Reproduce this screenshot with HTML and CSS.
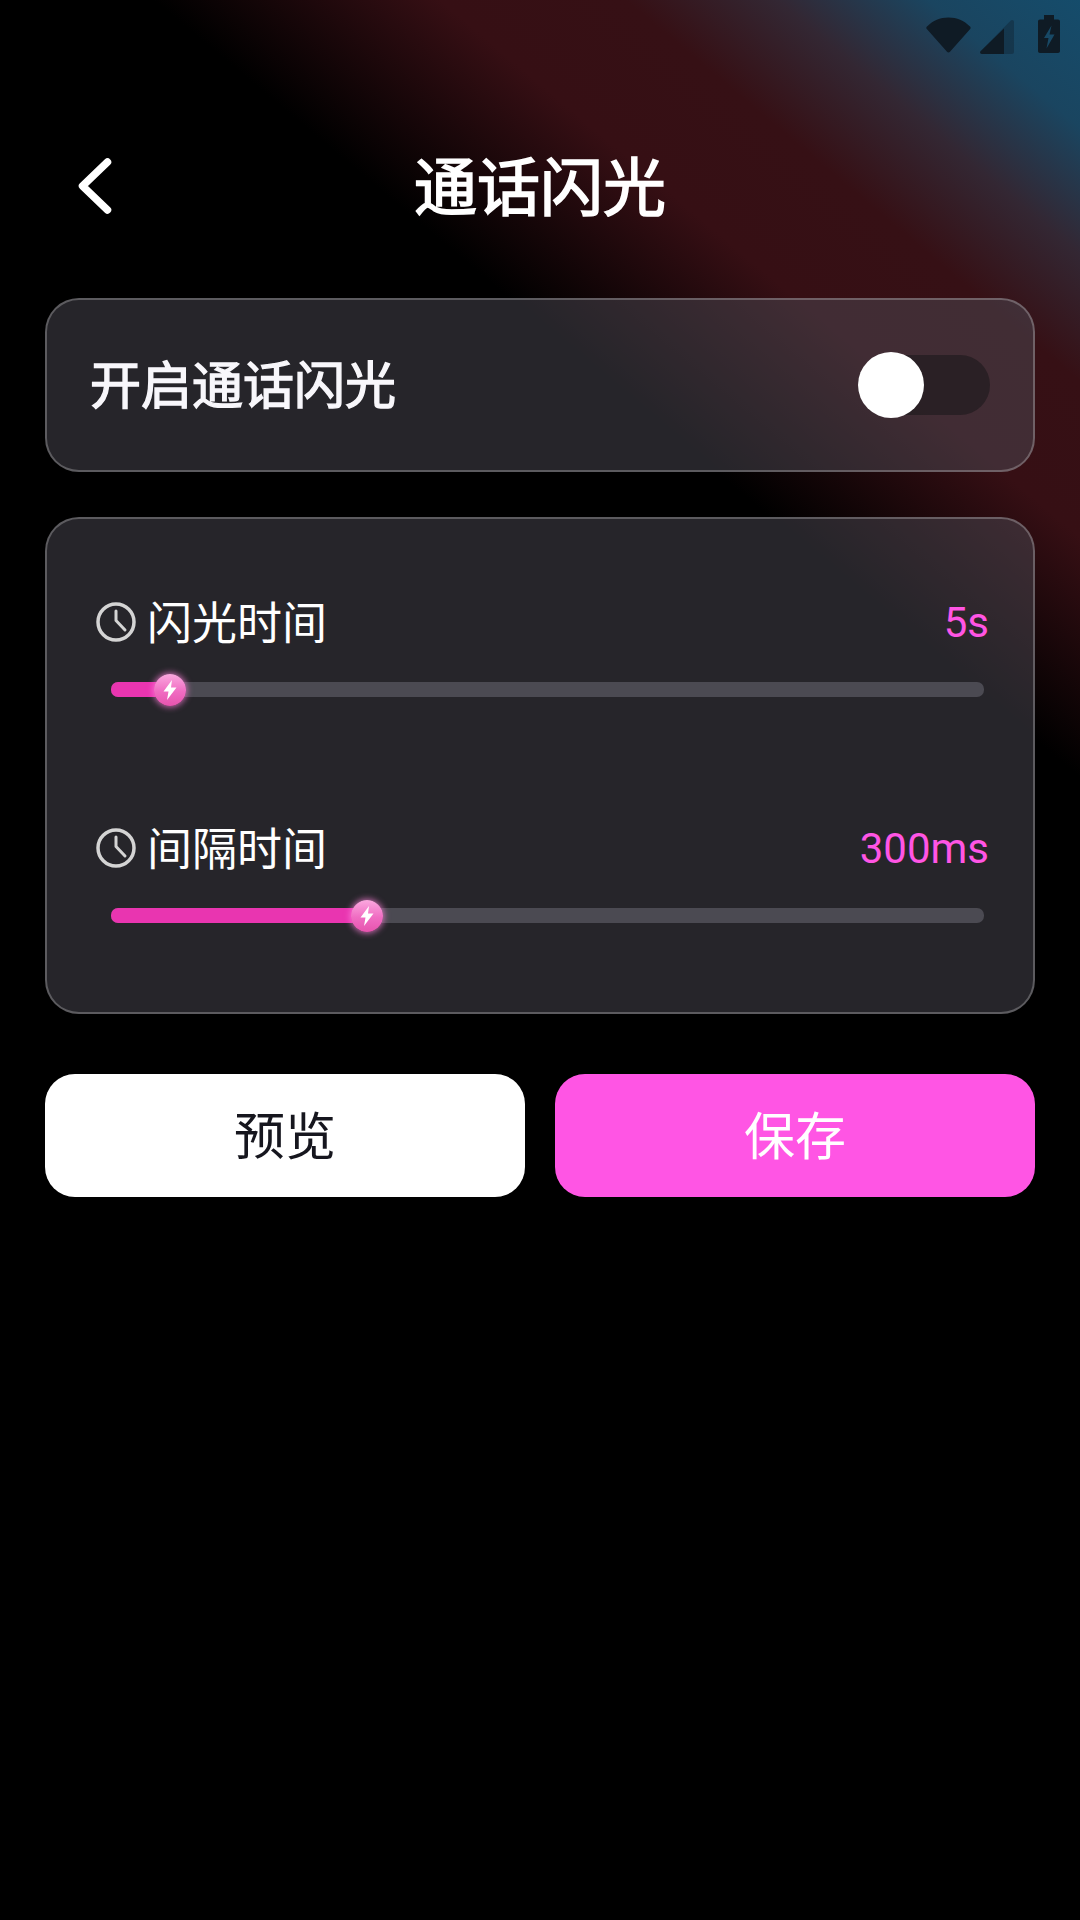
FILE: index.html
```html
<!DOCTYPE html>
<html lang="zh-CN">
<head>
    <meta charset="UTF-8">
    <meta name="viewport" content="width=device-width, initial-scale=1.0">
    <title>通话闪光</title>
    <link rel="stylesheet" href="styles.css">
</head>
<body>

    <div class="status-bar">
        <svg class="icon-wifi" width="45" height="36" viewBox="0 0 45 36">
            <path d="M1 9.500C7 3.500 14 0.500 22.500 0.500S38 3.500 44 9.500C44.800 10.300 44.800 11.200 44.200 12L24 34.800C23.100 35.700 21.900 35.700 21 34.800L0.800 12C0.200 11.200 0.200 10.300 1 9.500Z"/>
        </svg>
        <svg class="icon-signal" width="34" height="34" viewBox="0 0 34 34">
            <path d="M32 0C33.200 0 34 .8 34 2V32C34 33.200 33.200 34 32 34H2C.4 34-.4 32.400.6 31.200L30.600.7C31 .3 31.500 0 32 0Z" opacity=".35"/>
            <path d="M24 8.400V34H2C.4 34-.4 32.400.6 31.200Z"/>
        </svg>
        <svg class="icon-battery" width="22" height="38" viewBox="0 0 22 38">
            <path fill-rule="evenodd" d="M6 0H16V4.500H20C21.200 4.500 22 5.300 22 6.500V36C22 37.200 21.200 38 20 38H2C.8 38 0 37.200 0 36V6.500C0 5.300.8 4.500 2 4.500H6ZM13.500 10.500L6 23H10.500L8.500 33.500L16.500 19.500H11.500Z"/>
        </svg>
    </div>

    <header class="header">
        <svg class="back" width="36" height="60" viewBox="0 0 36 60">
            <path d="M30.500 6L5.500 30L30.500 54"/>
        </svg>
        <h1>通话闪光</h1>
    </header>

    <main class="container">
        <section class="card card-switch">
            <span class="switch-label">开启通话闪光</span>
            <div class="switch">
                <div class="switch-knob"></div>
            </div>
        </section>

        <section class="card card-sliders">
            <div class="setting">
                <div class="setting-head">
                    <svg class="clock" width="40" height="40" viewBox="0 0 40 40">
                        <circle cx="20" cy="20" r="18"/>
                        <path d="M20 9V18.500L29 28"/>
                    </svg>
                    <span class="setting-name">闪光时间</span>
                    <span class="setting-value">5s</span>
                </div>
                <div class="slider">
                    <div class="slider-fill" style="width: 59px">
                        <div class="slider-thumb">
                            <svg width="14" height="20" viewBox="0 0 14 20">
                                <path d="M9 0L0.500 11.500H5.500L4 20L13.500 7.500H8Z"/>
                            </svg>
                        </div>
                    </div>
                </div>
            </div>

            <div class="setting">
                <div class="setting-head">
                    <svg class="clock" width="40" height="40" viewBox="0 0 40 40">
                        <circle cx="20" cy="20" r="18"/>
                        <path d="M20 9V18.500L29 28"/>
                    </svg>
                    <span class="setting-name">间隔时间</span>
                    <span class="setting-value">300ms</span>
                </div>
                <div class="slider">
                    <div class="slider-fill" style="width: 256px">
                        <div class="slider-thumb">
                            <svg width="14" height="20" viewBox="0 0 14 20">
                                <path d="M9 0L0.500 11.500H5.500L4 20L13.500 7.500H8Z"/>
                            </svg>
                        </div>
                    </div>
                </div>
            </div>
        </section>

        <div class="actions">
            <button class="btn btn-preview">预览</button>
            <button class="btn btn-save">保存</button>
        </div>
    </main>

</body>
</html>
```

FILE: styles.css
```css
:root {
    --accent-color: #ff55e4;
    --fill-color: #e935b0;
    --track-color: #4b4a52;
    --text-color: #ffffff;
    --status-color: #0f1b25;
    --font-stack: 'Noto Sans CJK SC', 'Noto Sans', sans-serif;
}

* {
    box-sizing: border-box;
    margin: 0;
    padding: 0;
}

body {
    width: 1080px;
    height: 1920px;
    overflow: hidden;
    font-family: var(--font-stack);
    color: var(--text-color);
    background-color: #000;
    background-image: linear-gradient(40deg, #000 72.5%, #280b0f 78.8%, #360f14 81%, #361015 86.5%, #332733 91%, #1a4560 95.5%, #154c6b 100%);
}

.status-bar {
    height: 70px;
    padding: 15px 20px 0 0;
    display: flex;
    justify-content: flex-end;
    fill: var(--status-color);
}

.icon-wifi {
    margin-top: 2px;
}

.icon-signal {
    margin: 5px 0 0 9px;
}

.icon-battery {
    margin-left: 24px;
}

.header {
    height: 116px;
    margin-top: 58px;
    position: relative;
    display: flex;
    justify-content: center;
    align-items: center;
}

/* only regular and bold are installed, the stroke gives the medium weight */
.header h1 {
    font-size: 63px;
    font-weight: 400;
    -webkit-text-stroke: 1.6px currentColor;
    line-height: 1;
    margin-top: -7px;
}

.back {
    position: absolute;
    left: 77px;
    top: 28px;
    fill: none;
    stroke: var(--text-color);
    stroke-width: 7.500;
    stroke-linecap: round;
    stroke-linejoin: round;
}

.container {
    padding: 54px 45px 0;
}

.card {
    border: 2px solid rgba(255, 255, 255, 0.25);
    border-radius: 34px;
    background-color: rgba(76, 74, 84, 0.5);
}

.card-switch {
    height: 174px;
    padding: 0 43px 0 43px;
    display: flex;
    justify-content: space-between;
    align-items: center;
}

.switch-label {
    font-size: 51px;
    font-weight: 400;
    -webkit-text-stroke: 1.4px currentColor;
    line-height: 60px;
    margin-top: -6px;
    color: #f8f7fb;
}

.switch {
    position: relative;
    width: 132px;
    height: 60px;
    border-radius: 30px;
    background-color: rgba(20, 20, 22, 0.5);
}

.switch-knob {
    position: absolute;
    left: 0;
    top: -3px;
    width: 66px;
    height: 66px;
    border-radius: 50%;
    background-color: #fff;
}

.card-sliders {
    height: 497px;
    margin-top: 45px;
    padding: 73px 44px 0 49px;
}

.setting {
    height: 226px;
}

.setting-head {
    height: 60px;
    display: flex;
    align-items: center;
}

.clock {
    fill: none;
    stroke: #d4d4d4;
    stroke-width: 3.500;
    stroke-linecap: round;
    stroke-linejoin: round;
}

.clock path {
    stroke-width: 3;
}

.setting-name {
    margin-left: 11px;
    margin-top: -2px;
    font-size: 45px;
    line-height: 60px;
    flex: 1;
}

.setting-value {
    margin-top: 2px;
    font-family: 'Roboto', sans-serif;
    font-size: 42px;
    line-height: 60px;
    color: var(--accent-color);
}

.slider {
    height: 15px;
    margin: 30px 5px 0 15px;
    border-radius: 7px;
    background-color: var(--track-color);
}

.slider-fill {
    position: relative;
    height: 100%;
    border-radius: 7px 0 0 7px;
    background-color: var(--fill-color);
}

.slider-thumb {
    position: absolute;
    right: -16px;
    top: -8px;
    width: 32px;
    height: 32px;
    border-radius: 50%;
    display: flex;
    justify-content: center;
    align-items: center;
    fill: #fff;
    background-image: linear-gradient(180deg, #fba8df 0%, #f06cc2 55%, #e654ae 100%);
    box-shadow: 0 0 6px 1px rgba(255, 130, 220, 0.75);
}

.actions {
    margin-top: 60px;
    display: flex;
    gap: 30px;
}

.btn {
    flex: 1;
    height: 123px;
    padding-bottom: 6px;
    border: none;
    border-radius: 30px;
    font-family: var(--font-stack);
    font-size: 51px;
    font-weight: 400;
}

.btn-preview {
    background-color: #fff;
    color: #16161e;
}

.btn-save {
    background-color: var(--accent-color);
    color: #fff;
}
```
